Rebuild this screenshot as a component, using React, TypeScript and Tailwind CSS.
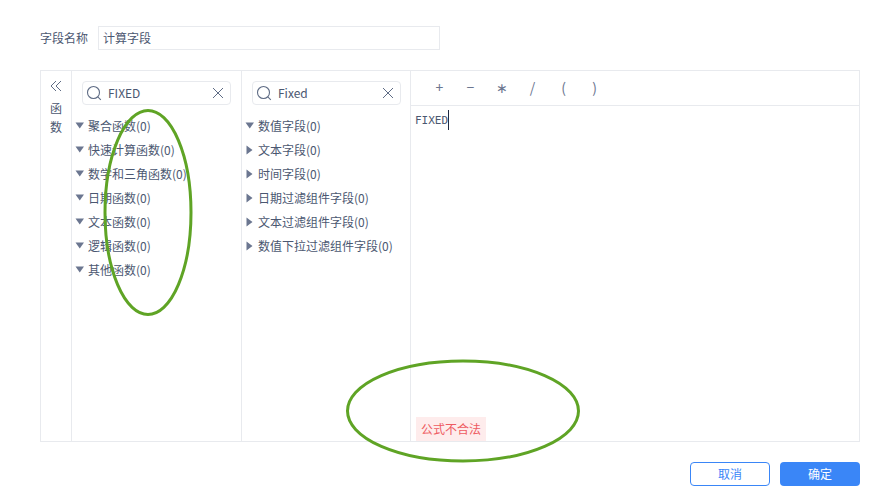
const funcs = ["聚合函数(0)", "快速计算函数(0)", "数学和三角函数(0)", "日期函数(0)", "文本函数(0)", "逻辑函数(0)", "其他函数(0)"];
const fields = [
  { label: "数值字段(0)", open: true },
  { label: "文本字段(0)", open: false },
  { label: "时间字段(0)", open: false },
  { label: "日期过滤组件字段(0)", open: false },
  { label: "文本过滤组件字段(0)", open: false },
  { label: "数值下拉过滤组件字段(0)", open: false },
];
const ops = ["+", "−", "∗", "/", "(", ")"];

function Caret({ open }: { open: boolean }) {
  return (
    <svg width="10" height="10" viewBox="0 0 10 10" className="shrink-0 text-[#6b7690]">
      {open ? <path d="M0.500 1.500h8.500l-4.250 6z" fill="currentColor" /> : <path d="M1.500 0.500v9l6-4.500z" fill="currentColor" />}
    </svg>
  );
}

function SearchBox({ value }: { value: string }) {
  return (
    <div className="flex h-6 items-center rounded-sm border border-[#e8eaee] pl-[3px] pr-[5px]">
      <svg width="16" height="16" viewBox="0 0 16 16" fill="none" stroke="#5f6c85" strokeWidth="1.100" className="shrink-0">
        <circle cx="7.500" cy="7.500" r="6" />
        <path d="M11.800 11.800l3 3" />
      </svg>
      <span className="ml-[6px] flex-1 text-xs text-[#4b5771]">{value}</span>
      <svg width="14" height="14" viewBox="0 0 14 14" fill="none" stroke="#5f6c85" strokeWidth="1" className="shrink-0">
        <path d="M2 2l10 10M12 2L2 12" />
      </svg>
    </div>
  );
}

export default function App() {
  return (
    <div className="relative h-[492px] w-[885px] overflow-hidden bg-white pl-10 pr-[25px] pt-[26px] font-['Noto_Sans_CJK_SC',sans-serif] text-xs text-[#4b5771]">
      {/* 字段名称 */}
      <div className="flex h-6 items-center">
        <span className="w-[58px]">字段名称</span>
        <div className="flex h-6 w-[342px] items-center border border-[#e8eaee] pl-1">计算字段</div>
      </div>

      {/* 编辑面板 */}
      <div className="mt-5 flex h-[372px] border border-[#e8eaee]">
        <div className="flex w-[31px] shrink-0 flex-col items-center border-r border-[#e8eaee] pt-[9px]">
          <svg width="12" height="12" viewBox="0 0 12 12" fill="none" stroke="#5f6c85" strokeWidth="1">
            <path d="M6 1L1 6l5 5M11 1L6 6l5 5" />
          </svg>
          <div className="mt-[6px] w-3 text-center leading-[19px]">函数</div>
        </div>

        <div className="w-[170px] shrink-0 border-r border-[#e8eaee]">
          <div className="px-[10px] pt-[10px]">
            <SearchBox value="FIXED" />
          </div>
          <div className="mt-[9px] pl-[3px]">
            {funcs.map((f) => (
              <div key={f} className="flex h-6 items-center gap-[3px] whitespace-nowrap">
                <Caret open />
                <span>{f}</span>
              </div>
            ))}
          </div>
        </div>

        <div className="w-[169px] shrink-0 border-r border-[#e8eaee]">
          <div className="pl-[10px] pr-[9px] pt-[10px]">
            <SearchBox value="Fixed" />
          </div>
          <div className="mt-[9px] pl-[3px]">
            {fields.map((f) => (
              <div key={f.label} className="flex h-6 items-center gap-[3px] whitespace-nowrap">
                <Caret open={f.open} />
                <span>{f.label}</span>
              </div>
            ))}
          </div>
        </div>

        <div className="relative flex-1">
          <div className="flex h-[35px] items-center border-b border-[#e8eaee] pb-[2px] pl-[13px] text-[#6b7690]">
            {ops.map((o) => (
              <span key={o} className="w-[31px] text-center text-sm">{o}</span>
            ))}
          </div>
          <div className="flex items-start pl-1 pt-[4px] font-['DejaVu_Sans_Mono',monospace] text-[11px]">
            <span className="border-r border-[#1f2a44] pt-px leading-[19px]">FIXED</span>
          </div>
          <div className="absolute bottom-0 left-[5px] flex h-6 w-[70px] items-center justify-center bg-[#feecec] text-[#ee5b62]">公式不合法</div>
        </div>
      </div>

      {/* 底部按钮 */}
      <div className="mt-5 flex justify-end gap-[10px]">
        <button className="h-6 w-20 rounded-sm border border-[#3a86f7] text-[#3a86f7]">取消</button>
        <button className="h-6 w-20 rounded-sm bg-[#3a86f7] text-white">确定</button>
      </div>

      {/* 标注 */}
      <svg width="885" height="492" className="pointer-events-none absolute left-0 top-0" fill="none" stroke="#5fa425" strokeWidth="3">
        <ellipse cx="148" cy="212.500" rx="43" ry="102" />
        <ellipse cx="463" cy="411" rx="115.500" ry="50" />
      </svg>
    </div>
  );
}
